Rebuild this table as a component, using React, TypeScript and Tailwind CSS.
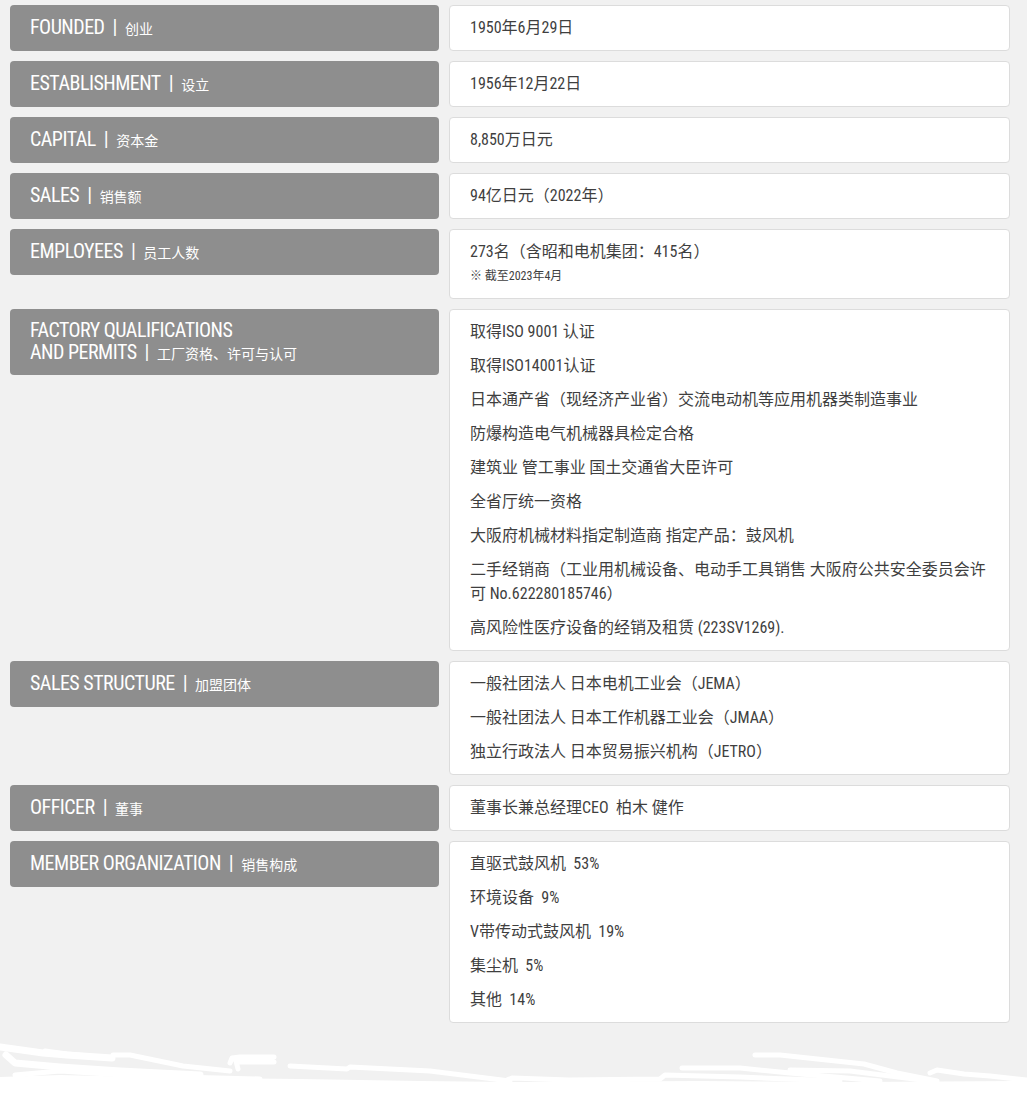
import React from "react";

interface Row {
  en: string[];
  zh: string;
  items: string[];
  note?: string;
}

const ROWS: Row[] = [
  { en: ["FOUNDED"], zh: "创业", items: ["1950年6月29日"] },
  { en: ["ESTABLISHMENT"], zh: "设立", items: ["1956年12月22日"] },
  { en: ["CAPITAL"], zh: "资本金", items: ["8,850万日元"] },
  { en: ["SALES"], zh: "销售额", items: ["94亿日元（2022年）"] },
  {
    en: ["EMPLOYEES"],
    zh: "员工人数",
    items: ["273名（含昭和电机集团：415名）"],
    note: "※ 截至2023年4月",
  },
  {
    en: ["FACTORY QUALIFICATIONS", "AND PERMITS"],
    zh: "工厂资格、许可与认可",
    items: [
      "取得ISO 9001 认证",
      "取得ISO14001认证",
      "日本通产省（现经济产业省）交流电动机等应用机器类制造事业",
      "防爆构造电气机械器具检定合格",
      "建筑业 管工事业 国土交通省大臣许可",
      "全省厅统一资格",
      "大阪府机械材料指定制造商 指定产品：鼓风机",
      "二手经销商（工业用机械设备、电动手工具销售 大阪府公共安全委员会许可 No.622280185746）",
      "高风险性医疗设备的经销及租赁 (223SV1269).",
    ],
  },
  {
    en: ["SALES STRUCTURE"],
    zh: "加盟团体",
    items: [
      "一般社团法人 日本电机工业会（JEMA）",
      "一般社团法人 日本工作机器工业会（JMAA）",
      "独立行政法人 日本贸易振兴机构（JETRO）",
    ],
  },
  { en: ["OFFICER"], zh: "董事", items: ["董事长兼总经理CEO\u00a0 柏木 健作"] },
  {
    en: ["MEMBER ORGANIZATION"],
    zh: "销售构成",
    items: [
      "直驱式鼓风机\u00a0 53%",
      "环境设备\u00a0 9%",
      "V带传动式鼓风机\u00a0 19%",
      "集尘机\u00a0 5%",
      "其他\u00a0 14%",
    ],
  },
];

const FONT =
  "font-['Roboto_Condensed','Liberation_Sans_Narrow','Noto_Sans_CJK_SC',sans-serif]";

function BrushEdge() {
  // white brush strokes at the bottom of the section
  const strokes = [
    "M0,16 L43,22 L67,24 L112,27",
    "M6,24 L15,32 L60,36 L120,40 L200,44",
    "M45,20 L67,23 L112,27",
    "M113,24 L130,24 L183,35 L230,40",
    "M230,32 L232,27 L240,26 L274,26 M238,31 L274,31 M236,30 L238,38",
    "M290,35 L347,38 L350,36 L430,40 L510,50",
    "M15,44 L60,40 L140,45 L260,48",
    "M682,37 L740,37 L790,42 L880,50",
    "M755,24 L780,24 L864,33 L897,42 L937,50",
    "M790,39 L850,40 L930,50",
    "M930,42 L937,39 L964,43 L990,45 L1017,48 L1027,49",
    "M507,49 L512,47 L569,49 L660,48 L665,44 L740,46 L840,50",
  ];
  return (
    <svg viewBox="0 0 1027 77" width="1027" height="77" className="block" preserveAspectRatio="none">
      <path d="M0,46 L60,44 L180,47 L300,48 L420,50 L520,51 L700,50 L860,51 L1027,50 L1027,77 L0,77 Z" fill="#fff" />
      {strokes.map((d, i) => (
        <path
          key={i}
          d={d}
          fill="none"
          stroke="#fff"
          strokeWidth={i === 0 || i === 1 ? 7 : 5}
          strokeLinecap="round"
          strokeLinejoin="round"
        />
      ))}
    </svg>
  );
}

export default function App() {
  return (
    <div className={`bg-[#f1f1f1] w-[1027px] ${FONT}`}>
      <div className="flex flex-col gap-[10px] pt-[5px] pl-[10px] pr-[17px]">
        {ROWS.map((row) => (
          <div key={row.zh} className="flex items-start gap-[10px]">
            {/* label */}
            <div className="w-[429px] shrink-0 min-h-[46px] flex items-center rounded-[4px] bg-[#8e8e8e] px-[20px] py-[10px] text-white">
              <div className="text-[20px] leading-[22px] tracking-[-0.5px]">
                {row.en.map((line, i) => (
                  <span key={line}>
                    {line}
                    {i < row.en.length - 1 ? (
                      <br />
                    ) : (
                      <>
                        <span className="mx-[8px]">|</span>
                        <span className="text-[14px] tracking-normal">{row.zh}</span>
                      </>
                    )}
                  </span>
                ))}
              </div>
            </div>

            {/* value */}
            <div className="flex-1 rounded-[4px] border border-[#dcdcdc] bg-white px-[20px] py-[10px] text-[16px] leading-[24px] text-[#3f3f3f]">
              <div className="flex flex-col gap-[10px]">
                {row.items.map((it) => (
                  <p key={it}>{it}</p>
                ))}
              </div>
              {row.note && <p className="text-[12px] leading-[24px]">{row.note}</p>}
            </div>
          </div>
        ))}
      </div>
      <div className="mt-[8px]">
        <BrushEdge />
      </div>
    </div>
  );
}
